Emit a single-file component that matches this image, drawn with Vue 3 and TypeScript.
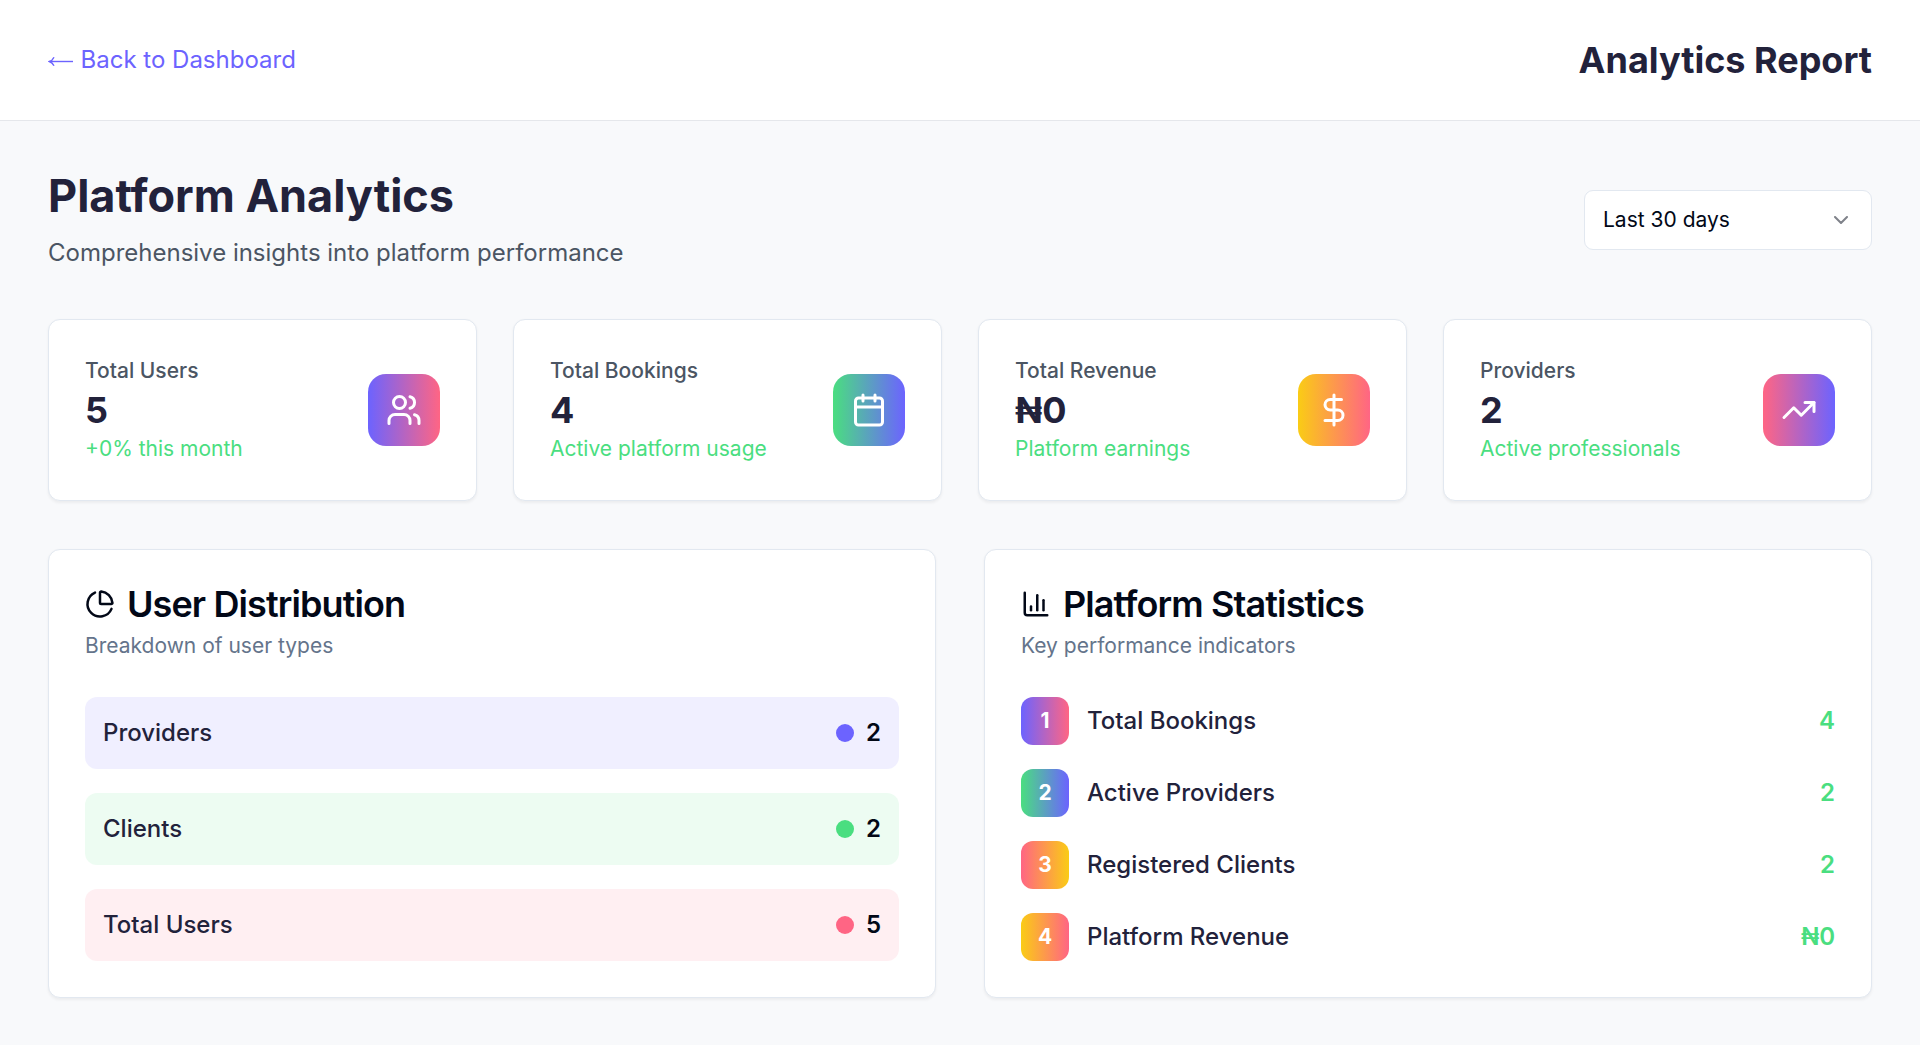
<script setup lang="ts">
interface Stat {
  label: string
  value: string
  note: string
  tone: string
  paths: string[]
}

interface Share {
  label: string
  value: number
  tone: string
}

interface Indicator {
  label: string
  value: string
  tone: string
}

const stats: Stat[] = [
  {
    label: 'Total Users',
    value: '5',
    note: '+0% this month',
    tone: 'violet-coral',
    paths: [
      'M16 21v-2a4 4 0 0 0-4-4H6a4 4 0 0 0-4 4v2',
      'M13 7a4 4 0 1 1-8 0a4 4 0 1 1 8 0',
      'M22 21v-2a4 4 0 0 0-3-3.87',
      'M16 3.13a4 4 0 0 1 0 7.75',
    ],
  },
  {
    label: 'Total Bookings',
    value: '4',
    note: 'Active platform usage',
    tone: 'green-violet',
    paths: [
      'M8 2v4',
      'M16 2v4',
      'M5 4h14a2 2 0 0 1 2 2v14a2 2 0 0 1-2 2H5a2 2 0 0 1-2-2V6a2 2 0 0 1 2-2z',
      'M3 10h18',
    ],
  },
  {
    label: 'Total Revenue',
    value: '₦0',
    note: 'Platform earnings',
    tone: 'yellow-coral',
    paths: ['M12 2v20', 'M17 5H9.5a3.5 3.5 0 0 0 0 7h5a3.5 3.5 0 0 1 0 7H6'],
  },
  {
    label: 'Providers',
    value: '2',
    note: 'Active professionals',
    tone: 'coral-violet',
    paths: ['M22 7L13.5 15.5L8.5 10.5L2 17', 'M16 7h6v6'],
  },
]

const shares: Share[] = [
  { label: 'Providers', value: 2, tone: 'violet' },
  { label: 'Clients', value: 2, tone: 'green' },
  { label: 'Total Users', value: 5, tone: 'coral' },
]

const indicators: Indicator[] = [
  { label: 'Total Bookings', value: '4', tone: 'violet-coral' },
  { label: 'Active Providers', value: '2', tone: 'green-violet' },
  { label: 'Registered Clients', value: '2', tone: 'coral-yellow' },
  { label: 'Platform Revenue', value: '₦0', tone: 'yellow-coral' },
]
</script>

<template>
  <div class="page">
    <header class="topbar">
      <a class="back">
        <svg class="arrow" viewBox="0 0 26 24">
          <path d="M1.5 13.5H25" />
          <path d="M6 9.2C5 11.4 3.4 12.9 1.3 13.5C3.4 14.1 5 15.6 6 17.8" />
        </svg>
        <span>Back to Dashboard</span>
      </a>
      <h1 class="report">Analytics Report</h1>
    </header>

    <main class="content">
      <section class="intro">
        <div>
          <h2 class="heading">Platform Analytics</h2>
          <p class="lead">Comprehensive insights into platform performance</p>
        </div>
        <button class="range" type="button">
          <span>Last 30 days</span>
          <svg class="icon chevron" viewBox="0 0 24 24"><path d="m6 9 6 6 6-6" /></svg>
        </button>
      </section>

      <section class="stats">
        <article v-for="stat in stats" :key="stat.label" class="card stat">
          <div>
            <p class="stat-label">{{ stat.label }}</p>
            <p class="stat-value">{{ stat.value }}</p>
            <p class="stat-note">{{ stat.note }}</p>
          </div>
          <div class="stat-icon" :class="stat.tone">
            <svg class="icon" viewBox="0 0 24 24">
              <path v-for="d in stat.paths" :key="d" :d="d" />
            </svg>
          </div>
        </article>
      </section>

      <section class="panels">
        <article class="card panel">
          <h3 class="panel-title">
            <svg class="icon" viewBox="0 0 24 24">
              <path d="M21 12c.552 0 1.005-.449.95-.998a10 10 0 0 0-8.953-8.951c-.55-.055-.998.398-.998.95v8a1 1 0 0 0 1 1z" />
              <path d="M21.21 15.89A10 10 0 1 1 8 2.83" />
            </svg>
            User Distribution
          </h3>
          <p class="panel-sub">Breakdown of user types</p>
          <ul class="rows">
            <li v-for="share in shares" :key="share.label" class="share" :class="share.tone">
              <span class="row-label">{{ share.label }}</span>
              <span class="share-value"><i class="dot"></i>{{ share.value }}</span>
            </li>
          </ul>
        </article>

        <article class="card panel">
          <h3 class="panel-title">
            <svg class="icon" viewBox="0 0 24 24">
              <path d="M3 3v16a2 2 0 0 0 2 2h16" />
              <path d="M18 17V9" />
              <path d="M13 17V5" />
              <path d="M8 17v-3" />
            </svg>
            Platform Statistics
          </h3>
          <p class="panel-sub">Key performance indicators</p>
          <ul class="rows">
            <li v-for="(item, i) in indicators" :key="item.label" class="indicator">
              <span class="rank" :class="item.tone">{{ i + 1 }}</span>
              <span class="row-label">{{ item.label }}</span>
              <span class="indicator-value">{{ item.value }}</span>
            </li>
          </ul>
        </article>
      </section>
    </main>
  </div>
</template>

<style>
body {
  margin: 0;
  background: #f8f9fb;
}
</style>

<style scoped>
.page {
  --violet: #6c63ff;
  --coral: #ff6584;
  --green: #4ade80;
  --yellow: #facc15;
  --ink: #22223b;
  box-sizing: border-box;
  height: 100vh;
  overflow: hidden;
  background: #f8f9fb;
  color: #020817;
  font-family: Inter, "Liberation Sans", sans-serif;
  font-size: 24px;
  line-height: 36px;
}
.page *,
.page *::before {
  box-sizing: border-box;
}
h1,
h2,
h3,
p,
ul {
  margin: 0;
  padding: 0;
}
ul {
  list-style: none;
}
.icon {
  display: block;
  flex: none;
  width: 36px;
  height: 36px;
  fill: none;
  stroke: currentColor;
  stroke-width: 2;
  stroke-linecap: round;
  stroke-linejoin: round;
}

.topbar {
  display: flex;
  align-items: center;
  justify-content: space-between;
  padding: 36px 48px;
  background: #fff;
  border-bottom: 1px solid #e5e7eb;
}
.back {
  display: flex;
  align-items: center;
  gap: 6.5px;
  color: var(--violet);
}
.arrow {
  display: block;
  width: 26px;
  height: 24px;
  fill: none;
  stroke: currentColor;
  stroke-width: 1.4;
}
.report {
  font-size: 36px;
  line-height: 48px;
  font-weight: 700;
  color: var(--ink);
}

.content {
  padding: 48px;
}
.intro {
  display: flex;
  align-items: center;
  justify-content: space-between;
  margin-bottom: 48px;
}
.heading {
  margin-bottom: 12px;
  font-size: 45px;
  line-height: 54px;
  font-weight: 700;
  color: var(--ink);
}
.lead {
  color: #4b5563;
}
.range {
  display: flex;
  align-items: center;
  justify-content: space-between;
  width: 288px;
  height: 60px;
  padding: 0 18px;
  border: 1px solid #e2e8f0;
  border-radius: 9px;
  background: #fff;
  color: #020817;
  font: inherit;
  font-size: 21px;
  line-height: 30px;
}
.chevron {
  width: 24px;
  height: 24px;
  opacity: 0.5;
}

.card {
  background: #fff;
  border: 1px solid #e2e8f0;
  border-radius: 12px;
  box-shadow: 0 1.5px 3px rgba(0, 0, 0, 0.05);
  padding: 36px;
}
.stats {
  display: grid;
  grid-template-columns: repeat(4, 1fr);
  gap: 36px;
  margin-bottom: 48px;
}
.stat {
  display: flex;
  align-items: center;
  justify-content: space-between;
}
.stat-label {
  font-size: 21px;
  line-height: 30px;
  font-weight: 500;
  color: #4b5563;
}
.stat-value {
  font-size: 36px;
  line-height: 48px;
  font-weight: 700;
  color: var(--ink);
}
.stat-note {
  font-size: 21px;
  line-height: 30px;
  color: var(--green);
}
.stat-icon {
  display: flex;
  align-items: center;
  justify-content: center;
  width: 72px;
  height: 72px;
  border-radius: 18px;
  color: #fff;
}
.violet-coral {
  background: linear-gradient(to right, var(--violet), var(--coral));
}
.green-violet {
  background: linear-gradient(to right, var(--green), var(--violet));
}
.yellow-coral {
  background: linear-gradient(to right, var(--yellow), var(--coral));
}
.coral-violet {
  background: linear-gradient(to right, var(--coral), var(--violet));
}
.coral-yellow {
  background: linear-gradient(to right, var(--coral), var(--yellow));
}

.panels {
  display: grid;
  grid-template-columns: repeat(2, 1fr);
  gap: 48px;
}
.panel-title {
  display: flex;
  align-items: center;
  gap: 12px;
  font-size: 36px;
  line-height: 36px;
  font-weight: 600;
  letter-spacing: -0.025em;
}
.panel-title .icon {
  width: 30px;
  height: 30px;
}
.panel-sub {
  margin: 9px 0 36px;
  font-size: 21px;
  line-height: 30px;
  color: #64748b;
}
.rows {
  display: flex;
  flex-direction: column;
  gap: 24px;
}
.row-label {
  font-weight: 500;
  color: var(--ink);
}
.share {
  display: flex;
  align-items: center;
  justify-content: space-between;
  padding: 18px;
  border-radius: 12px;
}
.share-value {
  display: flex;
  align-items: center;
  gap: 12px;
  font-weight: 600;
}
.dot {
  width: 18px;
  height: 18px;
  border-radius: 50%;
}
.violet {
  background: rgba(108, 99, 255, 0.1);
}
.violet .dot {
  background: var(--violet);
}
.green {
  background: rgba(74, 222, 128, 0.1);
}
.green .dot {
  background: var(--green);
}
.coral {
  background: rgba(255, 101, 132, 0.1);
}
.coral .dot {
  background: var(--coral);
}
.indicator {
  display: flex;
  align-items: center;
  gap: 18px;
}
.rank {
  display: flex;
  align-items: center;
  justify-content: center;
  width: 48px;
  height: 48px;
  border-radius: 12px;
  color: #fff;
  font-size: 21px;
  line-height: 30px;
  font-weight: 700;
}
.indicator-value {
  margin-left: auto;
  font-weight: 600;
  color: var(--green);
}
</style>
